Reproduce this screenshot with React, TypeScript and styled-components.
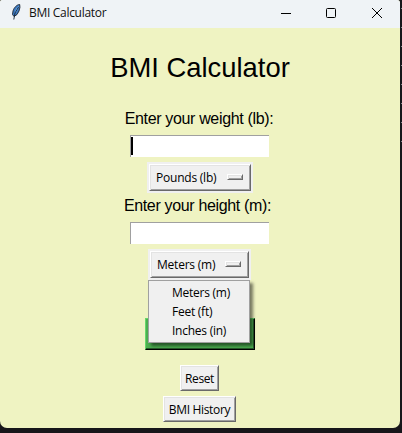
import React from "react";
import styled, { createGlobalStyle } from "styled-components";

const GlobalStyle = createGlobalStyle`
  body { margin: 0; background: #17161a; overflow: hidden; }
  * { box-sizing: border-box; }
`;

const Desktop = styled.div`
  width: 402px;
  height: 433px;
  background: repeating-linear-gradient(#17161a 0 8px, #85898e 8px 9px, #17161a 9px 19px) 401px 0 / 1px 142px no-repeat, #17161a;
`;

const Window = styled.div`
  display: flex;
  flex-direction: column;
  width: 400px;
  height: 428px;
  border-radius: 2px 3px 7px 7px;
  overflow: hidden;
  background: #eff3c2;
`;

const uiFont = `"Open Sans", "Noto Sans", sans-serif`;

const TitleBar = styled.header`
  display: flex;
  align-items: center;
  flex: 0 0 28px;
  padding: 0 18px 4px 11px;
  background: #eff3f6;
`;

const WindowTitle = styled.span`
  flex: 1;
  margin-left: 7px;
  padding-top: 2px;
  font: 12px/20px ${uiFont};
  letter-spacing: -0.3px;
  color: #111;
`;

const Controls = styled.div`
  display: flex;
  gap: 35px;
  margin-top: 1px;
  svg { display: block; }
  svg:last-child { margin-left: 1px; }
`;

const Content = styled.main`
  display: flex;
  flex-direction: column;
  align-items: center;
`;

const Heading = styled.h1`
  margin: 24px 0 0;
  font: 400 27.4px/32px "Liberation Sans", Arial, sans-serif;
  color: #000;
  white-space: nowrap;
`;

const Label = styled.label<{ $top: number; $right: number }>`
  margin: ${(p) => p.$top}px ${(p) => p.$right}px 0 0;
  font: 16px/20px "Liberation Sans", Arial, sans-serif;
  letter-spacing: -0.34px;
  color: #000;
`;

const Entry = styled.div<{ $top: number }>`
  width: 139px;
  height: 22px;
  margin: ${(p) => p.$top}px 1px 0 0;
  padding: 1px 0 0 0;
  border-top: 1px solid #a0a0a0;
  border-left: 1px solid #a0a0a0;
  background: #fff;
`;

const Caret = styled.div`
  width: 2px;
  height: 18px;
  background: #000;
`;

const OptionFrame = styled.div<{ $right: number; $width: number }>`
  width: ${(p) => p.$width}px;
  height: 31px;
  margin: 5px ${(p) => p.$right}px 0 0;
  padding: 2px;
  background: #f0f0f0;
`;

const raised = `
  border: 1px solid #fff;
  border-right-color: #696969;
  border-bottom-color: #696969;
  box-shadow: inset 1px 1px #e3e3e3, inset -1px -1px #a0a0a0;
  background: #f0f0f0;
`;

const OptionButton = styled.div`
  ${raised}
  display: flex;
  align-items: center;
  justify-content: space-between;
  height: 27px;
  padding: 0 7px 0 6px;
  font: 12px/20px ${uiFont};
  letter-spacing: -0.22px;
  color: #000;
  white-space: nowrap;
`;

const Indicator = styled.span`
  ${raised}
  width: 16px;
  height: 6px;
  margin-bottom: 1px;
`;

const SubmitArea = styled.div`
  position: relative;
  width: 110px;
  height: 32px;
  margin-top: 38px;
`;

const SubmitButton = styled.div`
  height: 32px;
  border: 1px solid #65d76a;
  border-right-color: #000;
  border-bottom-color: #000;
  box-shadow: inset -1px -1px #26582a;
  background: #4caf50;
`;

const Menu = styled.ul`
  position: absolute;
  left: 3px;
  top: -38px;
  width: 102px;
  height: 63px;
  margin: 0;
  padding: 2px 0 0 23px;
  border: 1px solid #a0a0a0;
  background: #f0f0f0;
  box-shadow: 3px 3px 3px rgba(0, 0, 0, 0.5);
  list-style: none;
`;

const MenuItem = styled.li`
  height: 19px;
  font: 12px/19px ${uiFont};
  letter-spacing: -0.25px;
  color: #000;
  white-space: nowrap;
`;

const Button = styled.div<{ $top: number; $width: number; $spacing: number }>`
  ${raised}
  width: ${(p) => p.$width}px;
  height: 26px;
  margin: ${(p) => p.$top}px 1px 0 0;
  font: 12px/25px ${uiFont};
  letter-spacing: ${(p) => p.$spacing}px;
  text-align: center;
  color: #000;
  white-space: nowrap;
`;

const Feather = () => (
  <svg width="11" height="18" viewBox="0 0 11 18">
    <path d="M8.7 1.5C6 1.5 3 4.5 2 8L1.5 11.5L3 13.5L6 11.5L8 8Q9.5 4 8.7 1.5Z" fill="#3b78c0" stroke="#1b2430" strokeWidth=".9" />
    <path d="M8 2.5Q4.5 5.5 3.5 10.5L6 8Z" fill="#7fbcf2" />
    <path d="M7.5 4L4 10L2.8 16.5" fill="none" stroke="#152536" strokeWidth=".9" />
  </svg>
);

function OptionMenu({ label, width, right = 0 }: { label: string; width: number; right?: number }) {
  return (
    <OptionFrame $width={width} $right={right}>
      <OptionButton>
        {label}
        <Indicator />
      </OptionButton>
    </OptionFrame>
  );
}

const heightUnits = ["Meters (m)", "Feet (ft)", "Inches (in)"];

export default function App() {
  return (
    <Desktop>
      <GlobalStyle />
      <Window>
        <TitleBar>
          <Feather />
          <WindowTitle>BMI Calculator</WindowTitle>
          <Controls>
            <svg width="10" height="10"><path d="M0 5.5H10" stroke="#000" /></svg>
            <svg width="10" height="10"><rect x=".5" y=".5" width="9" height="9" rx="1" fill="none" stroke="#000" /></svg>
            <svg width="10" height="10"><path d="M0 0L10 10M10 0L0 10" stroke="#000" /></svg>
          </Controls>
        </TitleBar>
        <Content>
          <Heading>BMI Calculator</Heading>
          <Label $top={25} $right={2}>Enter your weight (lb):</Label>
          <Entry $top={6}><Caret /></Entry>
          <OptionMenu label="Pounds (lb)" width={106} />
          <Label $top={3} $right={5}>Enter your height (m):</Label>
          <Entry $top={6} />
          <OptionMenu label="Meters (m)" width={103} right={1} />
          <SubmitArea>
            <SubmitButton />
            <Menu>
              {heightUnits.map((unit) => (
                <MenuItem key={unit}>{unit}</MenuItem>
              ))}
            </Menu>
          </SubmitArea>
          <Button $top={15} $width={39} $spacing={-0.4}>Reset</Button>
          <Button $top={5} $width={73} $spacing={-0.32}>BMI History</Button>
        </Content>
      </Window>
    </Desktop>
  );
}
